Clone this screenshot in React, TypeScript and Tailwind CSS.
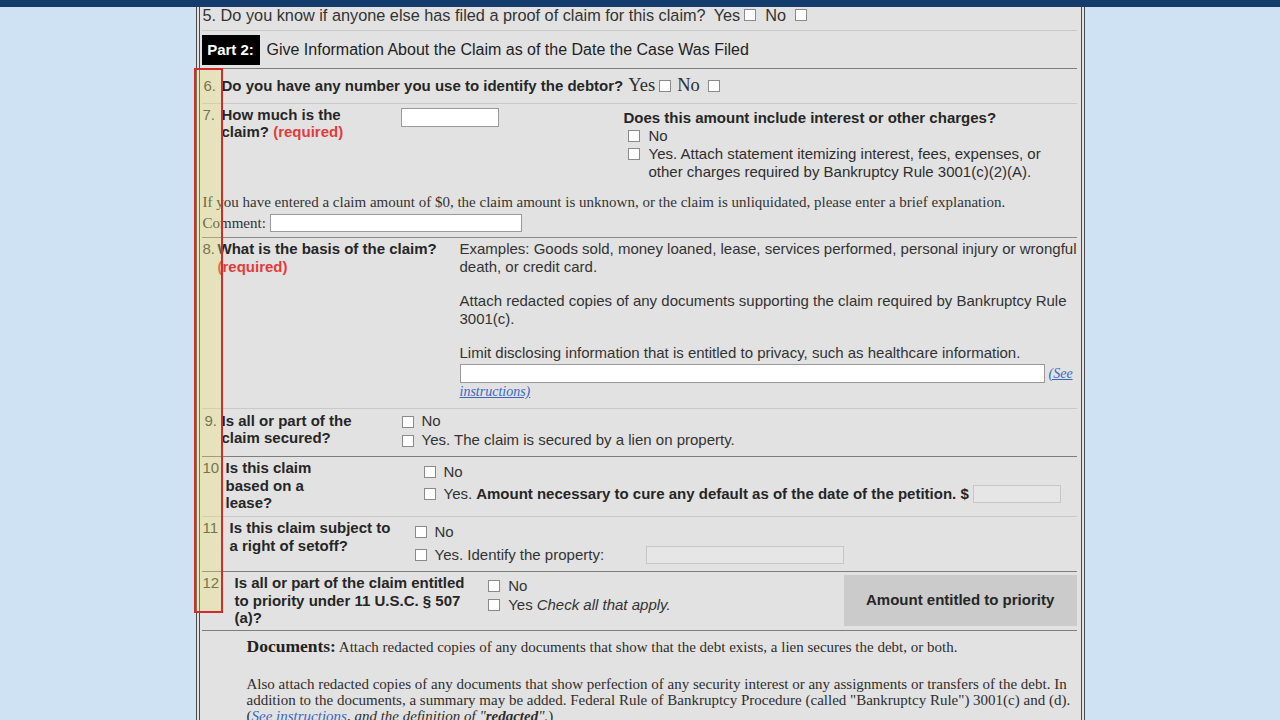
import type { ReactNode } from 'react'

const serif = "font-['Liberation_Serif','Times_New_Roman',serif]"

function Box({ className = '' }: { className?: string }) {
  return <span className={`inline-block h-[12px] w-[12px] shrink-0 border border-[#8a8a8a] bg-white ${className}`} />
}

function Check({ children, gap = 'mr-[8px]', className = '' }: { children: ReactNode; gap?: string; className?: string }) {
  return (
    <div className={`flex items-center whitespace-nowrap ${className}`}>
      <Box className={gap} />
      {children}
    </div>
  )
}

function Required() {
  return <span className="text-[#e23b3b]">(required)</span>
}

export default function App() {
  return (
    <div className="h-[720px] overflow-hidden bg-[#cfe2f3] font-['Liberation_Sans',Arial,sans-serif] text-[15px] text-[#2e2e2e]">
      <div className="h-[7px] bg-[#143c6d]" />
      <div className="relative mx-auto w-[889px] border-x-4 border-double border-[#4a4a4a] bg-[#e2e2e2] pl-[2px] pr-[4px]">
        {/* 5 */}
        <div className="flex h-[24px] items-start whitespace-nowrap border-b border-[#c9c9c9] pl-[1px] text-[16.3px] leading-4 text-[#333]">
          <span>5. Do you know if anyone else has filed a proof of claim for this claim?</span>
          <span className="ml-[8px]">Yes</span>
          <Box className="ml-[4px] mt-[2px]" />
          <span className="ml-[9px]">No</span>
          <Box className="ml-[9px] mt-[2px]" />
        </div>

        {/* Part 2 */}
        <div className="flex h-[38px] items-start border-b border-[#7e7e7e] pt-[4px]">
          <div className="flex h-[30px] w-[58px] items-center justify-center bg-black font-bold text-white">Part 2:</div>
          <div className="ml-[7px] flex h-[30px] items-center whitespace-nowrap text-[16px] text-[#222]">
            Give Information About the Claim as of the Date the Case Was Filed
          </div>
        </div>

        {/* 6 */}
        <div className="flex h-[35px] items-center whitespace-nowrap border-b border-[#c9c9c9]">
          <span className="w-[20px] pl-[2px] text-[#444]">6.</span>
          <span className="font-bold text-[#262626]">Do you have any number you use to identify the debtor?</span>
          <span className={`ml-[5px] text-[18.5px] ${serif}`}>Yes</span>
          <Box className="ml-[4px]" />
          <span className={`ml-[6px] text-[18.5px] ${serif}`}>No</span>
          <Box className="ml-[8px]" />
        </div>

        {/* 7 */}
        <div className="h-[134px] border-b border-[#8a8a8a] pt-[2px]">
          <div className="flex h-[74px]">
            <span className="w-[20px] pl-[1px] leading-[17px] text-[#444]">7.</span>
            <div className="w-[179px] whitespace-nowrap font-bold leading-[17px] text-[#262626]">
              How much is the
              <br />
              claim? <Required />
            </div>
            <div className="w-[223px]">
              <div className="mt-[2px] h-[19px] w-[98px] border border-[#9a9a9a] bg-white" />
            </div>
            <div className="mt-[2px] whitespace-nowrap">
              <div className="font-bold leading-[19px] text-[#262626]">Does this amount include interest or other charges?</div>
              <Check gap="ml-[4px] mr-[9px]" className="h-[18px]">
                No
              </Check>
              <div className="flex">
                <Box className="ml-[4px] mr-[9px] mt-[3px]" />
                <div className="leading-[17.5px]">
                  Yes. Attach statement itemizing interest, fees, expenses, or
                  <br />
                  other charges required by Bankruptcy Rule 3001(c)(2)(A).
                </div>
              </div>
            </div>
          </div>
          <p className={`mt-[14px] whitespace-nowrap pl-[1px] leading-4 text-[#333] ${serif}`}>
            If you have entered a claim amount of $0, the claim amount is unknown, or the claim is unliquidated, please
            enter a brief explanation.
          </p>
          <div className={`mt-[2px] flex items-center pl-[1px] text-[#333] ${serif}`}>
            <span className="w-[67px]">Comment:</span>
            <div className="h-[18px] w-[252px] border border-[#9a9a9a] bg-white" />
          </div>
        </div>

        {/* 8 */}
        <div className="flex h-[171px] border-b border-[#c9c9c9] pt-[2px]">
          <span className="w-[16px] pl-[1px] leading-[18px] text-[#444]">8.</span>
          <div className="w-[242px] font-bold leading-[18px] text-[#262626]">
            What is the basis of the claim?
            <br />
            <Required />
          </div>
          <div className="w-[617px] whitespace-nowrap leading-[18px] text-[#333]">
            <p>
              Examples: Goods sold, money loaned, lease, services performed, personal injury or wrongful
              <br />
              death, or credit card.
            </p>
            <p className="mt-[16px]">
              Attach redacted copies of any documents supporting the claim required by Bankruptcy Rule
              <br />
              3001(c).
            </p>
            <p className="mt-[16px]">Limit disclosing information that is entitled to privacy, such as healthcare information.</p>
            <div className="mt-[2px] flex items-center">
              <div className="h-[19px] w-[585px] border border-[#9a9a9a] bg-white" />
              <a className={`ml-[4px] text-[14px] italic text-[#3a66c4] underline ${serif}`}>(See</a>
            </div>
            <a className={`block text-[14px] italic text-[#3a66c4] underline ${serif}`}>instructions)</a>
          </div>
        </div>

        {/* 9 */}
        <div className="flex h-[48px] border-b border-[#7e7e7e] pt-[3px]">
          <span className="w-[20px] pl-[3px] leading-[17px] text-[#444]">9.</span>
          <div className="w-[180px] whitespace-nowrap font-bold leading-[17px] text-[#262626]">
            Is all or part of the
            <br />
            claim secured?
          </div>
          <div className="text-[#333]">
            <Check className="h-[19px]">No</Check>
            <Check className="h-[19px]">Yes. The claim is secured by a lien on property.</Check>
          </div>
        </div>

        {/* 10 */}
        <div className="flex h-[60px] border-b border-[#c9c9c9] pt-[2px]">
          <span className="w-[24px] pl-[1px] leading-[17.5px] text-[#444]">10</span>
          <div className="w-[198px] whitespace-nowrap font-bold leading-[17.5px] text-[#262626]">
            Is this claim
            <br />
            based on a
            <br />
            lease?
          </div>
          <div className="pt-[4px] text-[#333]">
            <Check className="h-[18px]">No</Check>
            <Check className="mt-[4px] h-[18px]">
              <span>Yes.</span>
              <span className="ml-[4px] font-bold text-[#262626]">
                Amount necessary to cure any default as of the date of the petition. $
              </span>
              <div className="ml-[4px] h-[18px] w-[88px] border border-[#c6c6c6] bg-[#e6e6e6]" />
            </Check>
          </div>
        </div>

        {/* 11 */}
        <div className="flex h-[55px] border-b border-[#7e7e7e] pt-[2px]">
          <span className="w-[28px] pl-[1px] leading-[18px] text-[#444]">11</span>
          <div className="w-[185px] whitespace-nowrap font-bold leading-[18px] text-[#262626]">
            Is this claim subject to
            <br />a right of setoff?
          </div>
          <div className="pt-[4px] text-[#333]">
            <Check className="h-[18px]">No</Check>
            <Check className="mt-[5px] h-[18px]">
              <span className="w-[211px]">Yes. Identify the property:</span>
              <div className="h-[18px] w-[198px] border border-[#c6c6c6] bg-[#e6e6e6]" />
            </Check>
          </div>
        </div>

        {/* 12 */}
        <div className="flex h-[59px] border-b border-[#7e7e7e] pt-[2px]">
          <span className="w-[33px] pl-[1px] leading-[17.5px] text-[#444]">12</span>
          <div className="w-[254px] whitespace-nowrap font-bold leading-[17.5px] text-[#262626]">
            Is all or part of the claim entitled
            <br />
            to priority under 11 U.S.C. § 507
            <br />
            (a)?
          </div>
          <div className="w-[356px] pt-[3px] text-[#333]">
            <Check className="h-[18px]">No</Check>
            <Check className="mt-[1px] h-[18px]">
              Yes <span className="ml-[4px] italic">Check all that apply.</span>
            </Check>
          </div>
          <div className="mt-[1px] flex h-[51px] w-[233px] items-center justify-center bg-[#cbcbcb] font-bold text-[#262626]">
            Amount entitled to priority
          </div>
        </div>

        {/* Documents */}
        <div className={`whitespace-nowrap pl-[45px] pt-[5px] text-[15px] text-[#2e2e2e] ${serif}`}>
          <p className="leading-[20px]">
            <span className="text-[17.5px] font-bold text-[#222]">Documents:</span> Attach redacted copies of any
            documents that show that the debt exists, a lien secures the debt, or both.
          </p>
          <p className="mt-[19px] leading-4">
            Also attach redacted copies of any documents that show perfection of any security interest or any
            assignments or transfers of the debt. In
            <br />
            addition to the documents, a summary may be added. Federal Rule of Bankruptcy Procedure (called "Bankruptcy
            Rule") 3001(c) and (d).
            <br />
            (<a className="italic text-[#3a66c4] underline">See instructions</a>
            <span className="italic">, and the definition of "</span>
            <span className="font-bold italic">redacted</span>
            <span className="italic">".</span>)
          </p>
          <div className="h-[40px]" />
        </div>

        <div className="pointer-events-none absolute left-[-6px] top-[61px] h-[545px] w-[29px] border-2 border-[#d22b2b] bg-[rgba(240,230,100,0.3)]" />
      </div>
    </div>
  )
}
